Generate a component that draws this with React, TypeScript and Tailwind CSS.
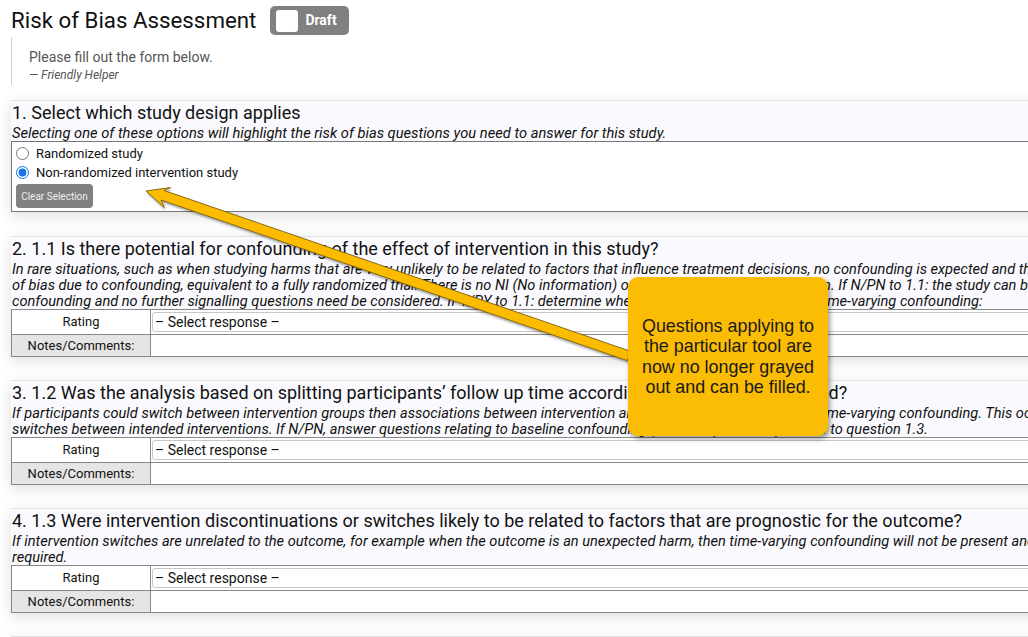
import React from 'react';

interface Question {
  title: string;
  lines: string[];
}

const questions: Question[] = [
  {
    title: '2. 1.1 Is there potential for confounding of the effect of intervention in this study?',
    lines: [
      'In rare situations, such as when studying harms that are very unlikely to be related to factors that influence treatment decisions, no confounding is expected and the study can be considered to be at low risk',
      'of bias due to confounding, equivalent to a fully randomized trial. There is no NI (No information) option for this signalling question. If N/PN to 1.1: the study can be considered to be at low risk of bias due to',
      'confounding and no further signalling questions need be considered. If Y/PY to 1.1: determine whether there is a need to assess time-varying confounding:',
    ],
  },
  {
    title: '3. 1.2 Was the analysis based on splitting participants’ follow up time according to intervention received?',
    lines: [
      'If participants could switch between intervention groups then associations between intervention and outcome may be biased by time-varying confounding. This occurs when prognostic factors influence',
      'switches between intended interventions. If N/PN, answer questions relating to baseline confounding (1.4 to 1.6). If Y/PY, proceed to question 1.3.',
    ],
  },
  {
    title: '4. 1.3 Were intervention discontinuations or switches likely to be related to factors that are prognostic for the outcome?',
    lines: [
      'If intervention switches are unrelated to the outcome, for example when the outcome is an unexpected harm, then time-varying confounding will not be present and only control for baseline confounding is',
      'required.',
    ],
  },
  {
    title: '5. 1.4 Did the authors use an appropriate analysis method that controlled for all the important confounding domains?',
    lines: ['Appropriate methods to control for measured confounders include stratification, regression, matching, standardization, and inverse probability weighting.'],
  },
];

function Card({ children, className = '' }: { children: React.ReactNode; className?: string }) {
  return (
    <div
      className={`w-[1100px] border-t border-[#e2e2e2] bg-[#fafafe] shadow-[0_4px_14px_rgba(0,0,0,0.13)] ${className}`}
    >
      {children}
    </div>
  );
}

function QuestionCard({ q }: { q: Question }) {
  return (
    <Card className="mb-[23px]">
      <div className="whitespace-nowrap pl-[1px] text-[18px] leading-[24px]">{q.title}</div>
      <div className="pl-[1px] text-[14.6px] italic leading-[16px]">
        {q.lines.map((l, i) => (
          <div key={i} className="whitespace-nowrap">
            {l}
          </div>
        ))}
      </div>
      <table className="w-full border-collapse text-[13px]">
        <tbody>
          <tr className="h-[25px]">
            <td className="w-[139px] border border-[#888] bg-white text-center">Rating</td>
            <td className="border border-[#888] bg-white px-[1px] py-[1px]">
              <div className="h-[20px] rounded-[3px] border border-[#c8c8c8] bg-white pl-[2px] text-[14px] leading-[18px]">
                – Select response –
              </div>
            </td>
          </tr>
          <tr className="h-[22px]">
            <td className="border border-[#888] bg-[#e5e5e5] text-center">Notes/Comments:</td>
            <td className="border border-[#888] bg-white"></td>
          </tr>
        </tbody>
      </table>
    </Card>
  );
}

function Arrow() {
  return (
    <svg className="pointer-events-none absolute left-0 top-0" width="1028" height="637" viewBox="0 0 1028 637">
      <defs>
        <filter id="arrowShadow" x="-10%" y="-10%" width="120%" height="130%">
          <feDropShadow dx="1" dy="2" stdDeviation="1.2" floodColor="#000" floodOpacity="0.35" />
        </filter>
      </defs>
      <polygon
        points="146,191 170.5,187.5 164.2,190.5 630.6,351.3 627.4,360.7 161,200 164.3,207.5"
        fill="#fbbc04"
        stroke="#6b4f00"
        strokeWidth="0.8"
        strokeLinejoin="round"
        filter="url(#arrowShadow)"
      />
    </svg>
  );
}

export default function App() {
  return (
    <div className="relative h-[637px] w-full overflow-hidden bg-white font-['Roboto','Liberation_Sans',sans-serif] text-[#111]">
      <div className="px-[11px]">
        {/* Header */}
        <div className="flex items-center gap-[14px] pt-[6px]">
          <h1 className="text-[22.3px] leading-[29px]">Risk of Bias Assessment</h1>
          <div className="flex h-[29px] w-[79px] items-center gap-[7px] rounded-[5px] bg-[#808080] pl-[6px]">
            <span className="h-[22px] w-[22px] rounded-[3px] bg-white" />
            <span className="text-[14px] font-bold text-white">Draft</span>
          </div>
        </div>

        {/* Helper quote */}
        <div className="mt-[2px] h-[48px] border-l-[1.5px] border-[#cfcfcf] pl-[17px] pt-[10px]">
          <div className="text-[14px] leading-[20px] text-[#555]">Please fill out the form below.</div>
          <div className="text-[12px] italic leading-[16px] text-[#555]">— Friendly Helper</div>
        </div>

        {/* Study design */}
        <Card className="mt-[15px] mb-[24px]">
          <div className="pl-[1px] text-[18px] leading-[24px]">1. Select which study design applies</div>
          <div className="pl-[1px] text-[14.7px] italic leading-[16px]">
            Selecting one of these options will highlight the risk of bias questions you need to answer for this study.
          </div>
          <div className="h-[71px] border border-[#777] bg-white pl-[4px] pt-[2px]">
            <label className="flex h-[19px] items-center gap-[7px] text-[13px]">
              <input type="radio" name="design" className="m-0 h-[13px] w-[13px]" />
              Randomized study
            </label>
            <label className="flex h-[19px] items-center gap-[7px] text-[13px]">
              <input type="radio" name="design" defaultChecked className="m-0 h-[13px] w-[13px] accent-[#1a73e8]" />
              Non-randomized intervention study
            </label>
            <button className="mt-[2px] h-[24px] w-[77px] rounded-[4px] bg-[#808080] text-[10px] text-[#eee]">
              Clear Selection
            </button>
          </div>
        </Card>

        {questions.map((q, i) => (
          <QuestionCard key={i} q={q} />
        ))}
      </div>

      <Arrow />

      {/* Callout */}
      <div className="absolute left-[628px] top-[277px] flex h-[159px] w-[200px] items-center justify-center rounded-[10px] bg-[#fbbc04] px-[6px] text-center font-['Liberation_Sans',sans-serif] text-[17.9px] leading-[20.5px] text-[#1a1a1a] shadow-[2px_3px_5px_rgba(0,0,0,0.4)]">
        Questions applying to the particular tool are now no longer grayed out and can be filled.
      </div>
    </div>
  );
}
